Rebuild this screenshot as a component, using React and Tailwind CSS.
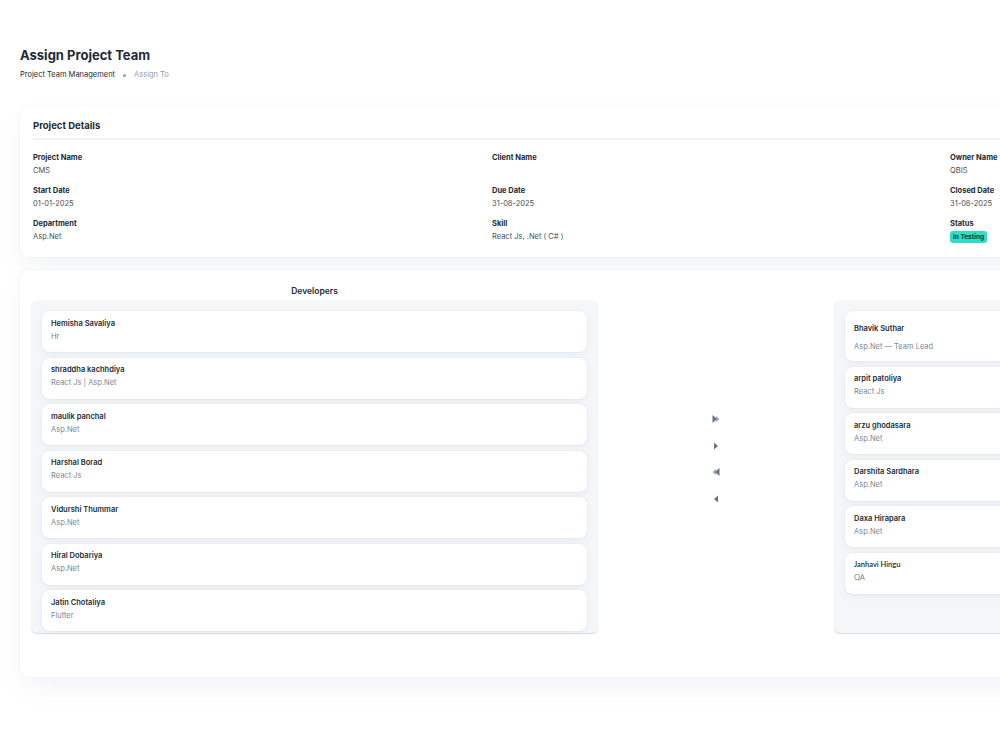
import React from "react";

const details = [
    ["Project Name", "CMS"],
    ["Client Name", ""],
    ["Owner Name", "QBIS"],
    ["Start Date", "01-01-2025"],
    ["Due Date", "31-08-2025"],
    ["Closed Date", "31-08-2025"],
    ["Department", "Asp.Net"],
    ["Skill", "React Js, .Net ( C# )"],
    ["Status", null],
];

const developers = [
    { name: "Hemisha Savaliya", role: "Hr" },
    { name: "shraddha kachhdiya", role: "React Js | Asp.Net" },
    { name: "maulik panchal", role: "Asp.Net" },
    { name: "Harshal Borad", role: "React Js" },
    { name: "Vidurshi Thummar", role: "Asp.Net" },
    { name: "Hiral Dobariya", role: "Asp.Net" },
    { name: "Jatin Chotaliya", role: "Flutter" },
];

const team = [
    { name: "arpit patoliya", role: "React Js" },
    { name: "arzu ghodasara", role: "Asp.Net" },
    { name: "Darshita Sardhara", role: "Asp.Net" },
    { name: "Daxa Hirapara", role: "Asp.Net" },
    { name: "Janhavi Hingu", role: "QA", lato: true },
];

const cardShadow =
    "shadow-[0_0_2px_0_rgba(145,158,171,0.2),0_12px_24px_-4px_rgba(145,158,171,0.12)]";

function DevCard({ dev }) {
    return (
        <div
            className={`h-[41px] shrink-0 rounded-lg bg-white px-[9px] pt-[7.5px] shadow-[0_0_2px_0_rgba(145,158,171,0.2),0_4px_8px_-2px_rgba(145,158,171,0.12)] ${
                dev.lato ? "font-['Lato',sans-serif]" : ""
            }`}
        >
            <div className="text-[7.5px] leading-[10px] font-semibold text-[#212b36]">
                {dev.name}
            </div>
            <div className="mt-[3px] text-[7.5px] leading-[10px] text-[#7b8794]">
                {dev.role}
            </div>
        </div>
    );
}

function Arrow({ children }) {
    return (
        <button className="flex h-[26.5px] w-[26px] items-center justify-center text-[#637381]">
            <svg width="10" height="10" viewBox="0 0 10 10" fill="currentColor">
                {children}
            </svg>
        </button>
    );
}

export default function App() {
    return (
        <div className="min-h-screen w-[1420px] bg-white px-[20px] pt-[45px] pb-[40px] font-['Inter',sans-serif] text-[#212b36]">
            <h1 className="text-[13px] leading-[20px] font-bold">Assign Project Team</h1>
            <div className="mt-[5px] flex items-center gap-[8px] text-[7.5px] leading-[10px]">
                <span className="text-[#212b36]">Project Team Management</span>
                <span className="h-[3px] w-[3px] rounded-full bg-[#919eab]"></span>
                <span className="text-[#919eab]">Assign To</span>
            </div>

            <div className={`mt-[26px] w-[1392px] rounded-lg bg-white px-[13px] pt-[13px] pb-[15px] ${cardShadow}`}>
                <div className="text-[9.5px] leading-[14px] font-bold">Project Details</div>
                <div className="mt-[5px] h-[2px] bg-[#f1f3f5]"></div>
                <div className="mt-[12px] grid grid-cols-[459px_458px_1fr] gap-y-[9px]">
                    {details.map(([label, value]) => (
                        <div key={label}>
                            <div className="text-[7.5px] leading-[11px] font-bold text-[#212b36]">
                                {label}
                            </div>
                            <div className="mt-[2px] h-[11px] text-[7.5px] leading-[11px] text-[#454f5b]">
                                {value === null ? (
                                    <span className="inline-block rounded-[3px] bg-[#2fdcc8] px-[3px] text-[6.5px] leading-[12px] font-bold text-[#0b3b36]">
                                        In Testing
                                    </span>
                                ) : (
                                    value
                                )}
                            </div>
                        </div>
                    ))}
                </div>
            </div>

            <div className={`mt-[13px] w-[1392px] rounded-lg bg-white px-[11px] pt-[15px] pb-[44px] ${cardShadow}`}>
                <div className="flex">
                    <div className="flex w-[567px] flex-col">
                        <div className="mb-[3px] text-center text-[8.5px] leading-[12px] font-semibold text-[#212b36]">
                            Developers
                        </div>
                        <div className="flex flex-1 flex-col gap-[5.5px] rounded-md bg-[#f4f6f8] px-[11px] pt-[11px] pb-[2px] shadow-[0_1px_1px_rgba(145,158,171,0.35)]">
                            {developers.map((dev) => (
                                <DevCard key={dev.name} dev={dev} />
                            ))}
                        </div>
                    </div>

                    <div className="flex flex-1 flex-col items-center justify-center">
                        <Arrow>
                            <path d="M1.5 1 6 5 1.5 9z" />
                            <path d="M4.5 1.6 8.5 5 4.5 8.4 5.3 5z" opacity="0.6" />
                        </Arrow>
                        <Arrow>
                            <path d="M3 1.5 7 5 3 8.5z" />
                        </Arrow>
                        <Arrow>
                            <path d="M8.5 1 4 5 8.5 9z" />
                            <path d="M5.5 1.6 1.5 5 5.5 8.4 4.7 5z" opacity="0.6" />
                        </Arrow>
                        <Arrow>
                            <path d="M7 1.5 3 5 7 8.5z" />
                        </Arrow>
                    </div>

                    <div className="flex w-[567px] flex-col">
                        <div className="mb-[3px] h-[12px]"></div>
                        <div className="flex flex-1 flex-col gap-[5.5px] rounded-md bg-[#f4f6f8] px-[11px] pt-[11px] pb-[2px] shadow-[0_1px_1px_rgba(145,158,171,0.35)]">
                            <div className="h-[50px] shrink-0 rounded-lg bg-white px-[9px] pt-[13px] shadow-[0_0_2px_0_rgba(145,158,171,0.2),0_4px_8px_-2px_rgba(145,158,171,0.12)]">
                                <div className="text-[7.5px] leading-[10px] font-semibold text-[#212b36]">
                                    Bhavik Suthar
                                </div>
                                <div className="mt-[8px] text-[7.5px] leading-[10px] text-[#7b8794]">
                                    Asp.Net — Team Lead
                                </div>
                            </div>
                            {team.map((dev) => (
                                <DevCard key={dev.name} dev={dev} />
                            ))}
                        </div>
                    </div>
                </div>
            </div>
        </div>
    );
}
